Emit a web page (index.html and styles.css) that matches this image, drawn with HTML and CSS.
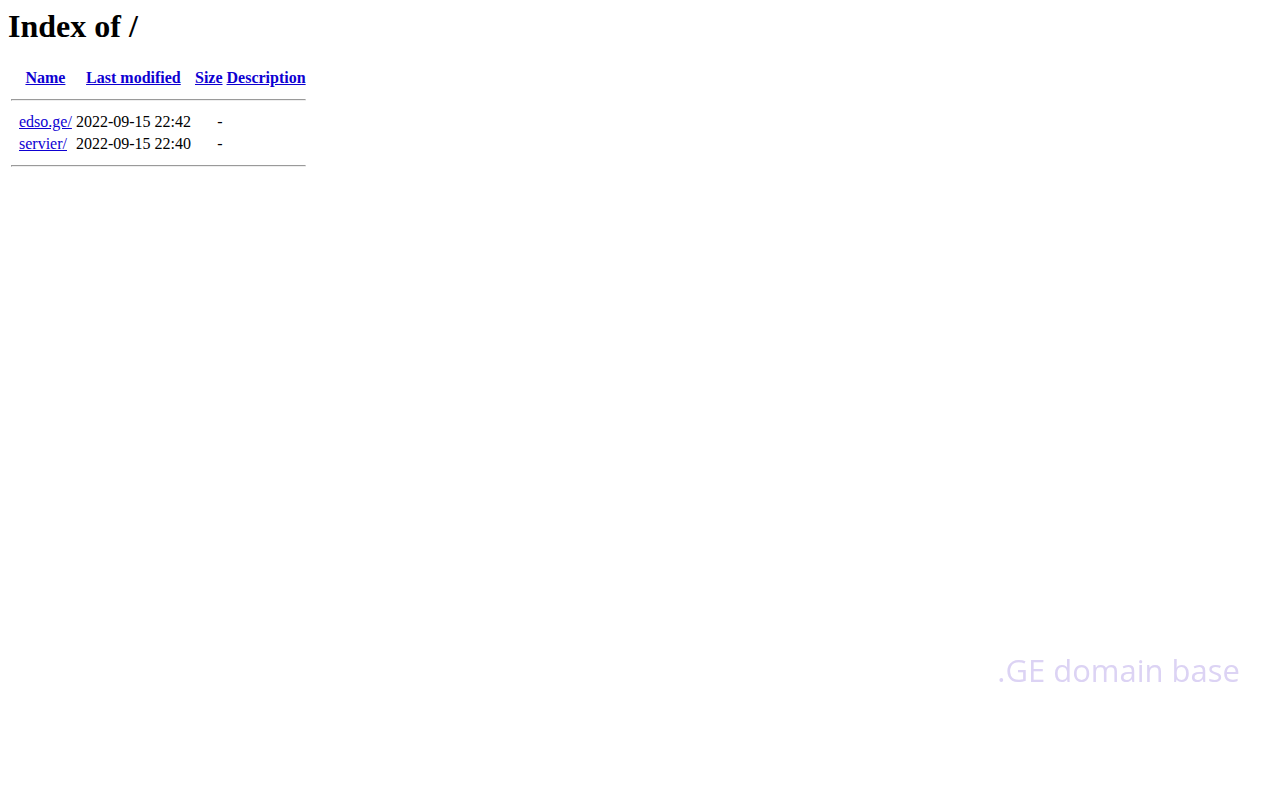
FILE: index.html
```html
<!DOCTYPE html>
<html lang="en">
<head>
    <meta charset="UTF-8">
    <meta name="viewport" content="width=device-width, initial-scale=1.0">
    <title>Index of /</title>
    <link rel="stylesheet" href="styles.css">
</head>
<body>
    <h1>Index of /</h1>
    <table class="listing">
        <tr>
            <th class="icon"></th>
            <th><a href="?C=N;O=D">Name</a></th>
            <th><a href="?C=M;O=A">Last modified</a></th>
            <th><a href="?C=S;O=A">Size</a></th>
            <th><a href="?C=D;O=A">Description</a></th>
        </tr>
        <tr><th colspan="5"><hr></th></tr>
        <tr>
            <td class="icon"></td>
            <td><a href="edso.ge/">edso.ge/</a></td>
            <td class="right">2022-09-15 22:42</td>
            <td class="right">-</td>
            <td></td>
        </tr>
        <tr>
            <td class="icon"></td>
            <td><a href="servier/">servier/</a></td>
            <td class="right">2022-09-15 22:40</td>
            <td class="right">-</td>
            <td></td>
        </tr>
        <tr><th colspan="5"><hr></th></tr>
    </table>
    <div class="watermark">.GE domain base</div>
</body>
</html>
```
FILE: styles.css
```css
body {
    margin: 8px;
    background: #fff;
    color: #000;
    font-family: "Liberation Serif", "Times New Roman", serif;
    font-size: 16px;
}
h1 {
    margin: 0 0 21px;
    font-size: 32px;
}
a {
    color: #0e00d2;
}
.listing {
    border-spacing: 2px;
}
.listing th,
.listing td {
    padding: 1px;
}
.listing .icon {
    width: 4px;
}
.listing .right {
    text-align: right;
}
.listing hr {
    margin: 8px 0;
}
.watermark {
    position: fixed;
    right: 40px;
    bottom: 108px;
    color: #dcd3f4;
    font-family: "Open Sans", sans-serif;
    font-size: 31px;
    line-height: 44px;
}
```
